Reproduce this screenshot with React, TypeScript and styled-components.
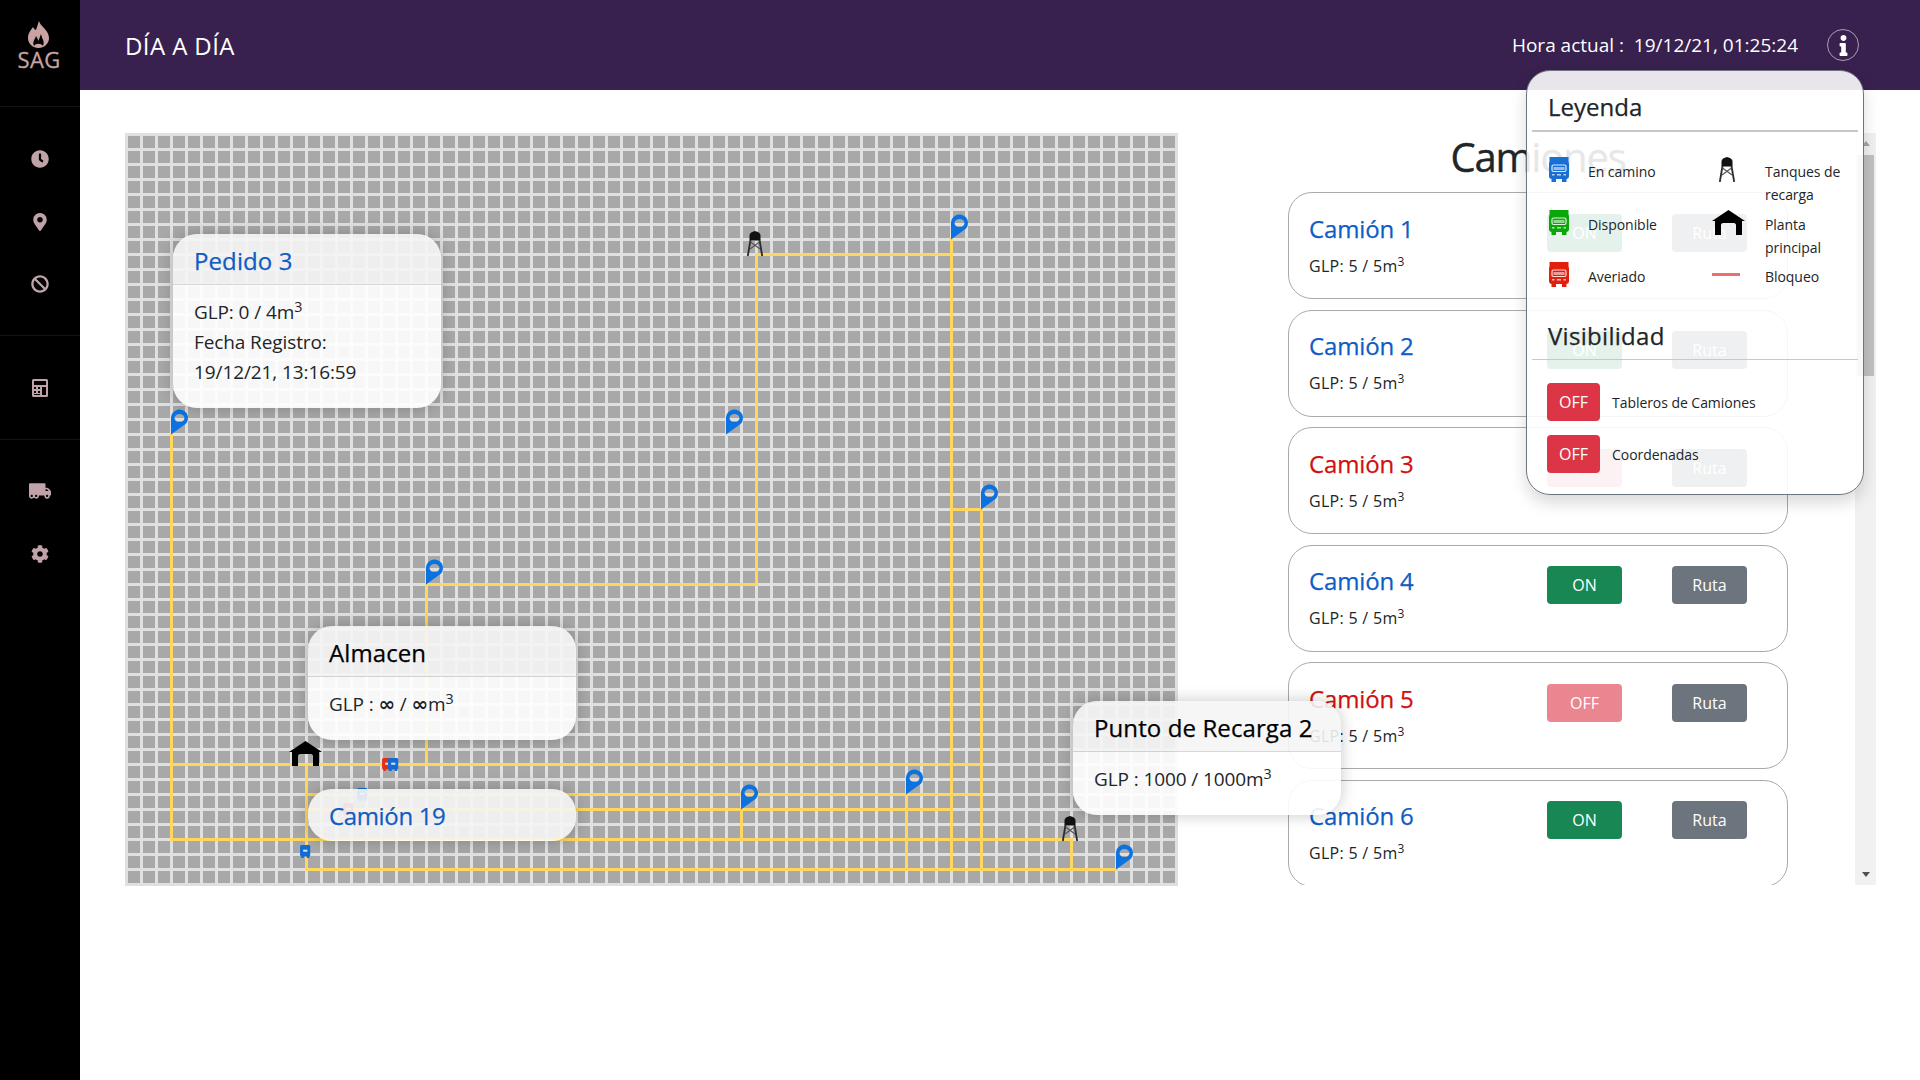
import React from "react";
import styled, { createGlobalStyle } from "styled-components";
import {
  FaBan,
  FaClock,
  FaCog,
  FaInfo,
  FaMapMarkerAlt,
  FaTruckMoving,
} from "react-icons/fa";

const GRID_STEP = 15;
const node = (n: number) => 1.5 + n * GRID_STEP;

type Segment = [number, number, number, number];

// routes in grid coordinates: x1, y1, x2, y2
const ROUTES: Segment[] = [
  [42, 8, 42, 30],
  [42, 8, 55, 8],
  [55, 7, 55, 49],
  [20, 30, 42, 30],
  [20, 30, 20, 42],
  [3, 42, 57, 42],
  [3, 20, 3, 47],
  [3, 47, 63, 47],
  [63, 47, 63, 49],
  [12, 49, 66, 49],
  [12, 42, 12, 49],
  [12, 44, 57, 44],
  [12, 45, 55, 45],
  [41, 45, 41, 47],
  [52, 44, 52, 49],
  [57, 25, 57, 49],
  [55, 25, 57, 25],
];

const PINS = [
  [3, 20],
  [20, 30],
  [40, 20],
  [55, 7],
  [57, 25],
  [41, 45],
  [52, 44],
  [66, 49],
];

const TANKS = [
  [42, 8],
  [63, 47],
];

const MAP_TRUCKS = [
  { x: 257, y: 625, color: "#e0301c" },
  { x: 263, y: 625, color: "#0f6cd6" },
  { x: 175, y: 712, color: "#0f6cd6" },
  { x: 232, y: 655, color: "#0f6cd6" },
  { x: 218, y: 670, color: "#e0301c" },
];

const TRUCKS = [
  { id: 1, active: true },
  { id: 2, active: true },
  { id: 3, active: false },
  { id: 4, active: true },
  { id: 5, active: false },
  { id: 6, active: true },
];

const GlobalStyle = createGlobalStyle`
  html, body {
    margin: 0;
    padding: 0;
    background: #fff;
    font-family: "Open Sans", "Noto Sans", sans-serif;
    color: #212529;
  }
  sup {
    font-size: 0.75em;
    line-height: 0;
    position: relative;
    top: -0.5em;
    vertical-align: baseline;
  }
`;

const Shell = styled.div`
  position: relative;
  display: flex;
  width: 1920px;
  height: 1080px;
  overflow: hidden;
`;

const Sidebar = styled.nav`
  width: 80px;
  flex: none;
  background: #000;
  color: #bfa3a8;
  display: flex;
  flex-direction: column;
`;

const LogoBlock = styled.div`
  height: 106px;
  padding-top: 21px;
  box-sizing: border-box;
  display: flex;
  flex-direction: column;
  align-items: center;
  color: #c9a3a3;

  > svg {
    margin-left: -3px;
  }
`;

const LogoText = styled.span`
  font-size: 22px;
  font-weight: 500;
  line-height: 20px;
  margin-top: 1px;
  margin-left: -2px;
  letter-spacing: 0.3px;
  -webkit-text-stroke: 0.3px currentColor;
`;

const NavGroup = styled.div<{ $height: number; $pad: number; $gap: number }>`
  height: ${(p) => p.$height}px;
  box-sizing: border-box;
  border-top: 1px solid #141414;
  padding-top: ${(p) => p.$pad}px;
  display: flex;
  flex-direction: column;
  align-items: center;
  gap: ${(p) => p.$gap}px;
`;

const NavIcon = styled.span`
  height: 20px;
  display: flex;
  align-items: center;
  justify-content: center;
`;

const Main = styled.div`
  flex: 1;
  display: flex;
  flex-direction: column;
  min-width: 0;
`;

const Header = styled.header`
  height: 90px;
  flex: none;
  box-sizing: border-box;
  padding: 0 61px 0 45px;
  background: #38204f;
  color: #fff;
  display: flex;
  align-items: center;
  justify-content: space-between;
`;

const PageTitle = styled.h1`
  margin: 0;
  font-size: 24px;
  font-weight: 400;
  letter-spacing: 0.4px;
`;

const HeaderRight = styled.div`
  display: flex;
  align-items: center;
  gap: 29px;
`;

const CurrentTime = styled.span`
  font-size: 19px;
  white-space: pre;
`;

const InfoButton = styled.span`
  width: 32px;
  height: 32px;
  box-sizing: border-box;
  border-radius: 50%;
  border: 1.5px solid #a99fb2;
  display: flex;
  align-items: center;
  justify-content: center;
  color: #fff;
  font-size: 21px;
`;

const Content = styled.main`
  flex: 1;
  display: flex;
  padding: 43px 44px 0 45px;
  gap: 43px;
  min-height: 0;
`;

const MapCanvas = styled.div`
  position: relative;
  z-index: 2;
  width: 1053px;
  height: 753px;
  flex: none;
  background-color: #a8a8a8;
  background-image: linear-gradient(to right, #e0e0e0 3px, transparent 3px),
    linear-gradient(to bottom, #e0e0e0 3px, transparent 3px);
  background-size: 15px 15px;

  > svg {
    display: block;
  }
`;

const MapPopover = styled.div<{ $left: number; $top: number; $height: number }>`
  position: absolute;
  left: ${(p) => p.$left}px;
  top: ${(p) => p.$top}px;
  width: 268px;
  height: ${(p) => p.$height}px;
  box-sizing: border-box;
  border-radius: 24px;
  overflow: hidden;
  background: rgba(255, 255, 255, 0.9);
  box-shadow: 0 0 16px rgba(0, 0, 0, 0.22);
`;

const PopoverHeader = styled.div<{ $color: string; $flat?: boolean }>`
  height: 51px;
  box-sizing: border-box;
  padding: 12px 21px 0;
  background: rgba(0, 0, 0, 0.035);
  border-bottom: ${(p) => (p.$flat ? "0" : "1px solid rgba(0, 0, 0, 0.12)")};
  color: ${(p) => p.$color};
  font-size: 24px;
  line-height: 30px;
  letter-spacing: ${(p) => (p.$flat ? "-0.35px" : "0.1px")};
  -webkit-text-stroke: 0.25px currentColor;
  white-space: nowrap;
`;

const PopoverBody = styled.div`
  padding: 13px 21px 0;
  font-size: 19px;
  line-height: 29.8px;
  letter-spacing: -0.1px;
`;

const InfinityMark = styled.span`
  font-family: "DejaVu Sans", sans-serif;
  font-weight: 700;
  font-size: 20px;
  line-height: 0;
`;

const TruckPanel = styled.section`
  flex: 1;
  height: 752px;
  display: flex;
  min-width: 0;
`;

const TruckList = styled.div`
  flex: 1;
  overflow: hidden;
  display: flex;
  flex-direction: column;
  align-items: center;
  min-width: 0;
`;

const PanelTitle = styled.h2`
  margin: 0 0 11.3px;
  font-size: 40px;
  font-weight: 400;
  line-height: 48px;
  letter-spacing: -1.2px;
  -webkit-text-stroke: 0.4px currentColor;
`;

const TruckCard = styled.article`
  width: 500px;
  height: 107px;
  flex: none;
  box-sizing: border-box;
  margin-bottom: 10.5px;
  border: 1px solid #aaa;
  border-radius: 24px;
  display: flex;
  justify-content: space-between;
  padding: 20.7px 40px 0 20px;
`;

const CardTitle = styled.h4<{ $active: boolean }>`
  margin: 0 0 11px;
  font-size: 24px;
  font-weight: 400;
  line-height: 29px;
  letter-spacing: -0.15px;
  -webkit-text-stroke: 0.25px currentColor;
  color: ${(p) => (p.$active ? "#0f5cc4" : "#d10f0f")};
`;

const CardText = styled.div`
  font-size: 16px;
  line-height: 24px;
  letter-spacing: 0.3px;
`;

const CardActions = styled.div`
  display: flex;
  gap: 50px;
  align-items: flex-start;
`;

const ActionButton = styled.button<{ $variant: "on" | "off" | "route" | "danger"; $small?: boolean }>`
  width: ${(p) => (p.$small ? 53 : 75)}px;
  height: 38px;
  flex: none;
  padding: 0;
  border: 0;
  border-radius: 4px;
  color: #fff;
  font-family: inherit;
  font-size: 16px;
  background: ${(p) =>
    p.$variant === "on"
      ? "#198754"
      : p.$variant === "route"
        ? "#6c757d"
        : p.$variant === "danger"
          ? "#dc3545"
          : "#ea868f"};
`;

const ScrollTrack = styled.div`
  position: relative;
  width: 21px;
  flex: none;
  background: #f1f1f1;
`;

const ScrollThumb = styled.div`
  position: absolute;
  left: 2px;
  right: 2px;
  top: 22px;
  height: 221px;
  background: #c1c1c1;
`;

const ScrollArrow = styled.span<{ $down?: boolean }>`
  position: absolute;
  left: 7px;
  ${(p) => (p.$down ? "bottom: 8px;" : "top: 8px;")}
  width: 0;
  height: 0;
  border-left: 4px solid transparent;
  border-right: 4px solid transparent;
  ${(p) => (p.$down ? "border-top: 5px solid #505050;" : "border-bottom: 5px solid #a3a3a3;")}
`;

const LegendPanel = styled.aside`
  position: absolute;
  z-index: 3;
  left: 1526px;
  top: 70px;
  width: 338px;
  height: 425px;
  box-sizing: border-box;
  border: 1px solid #6c757d;
  border-radius: 24px;
  background: rgba(255, 255, 255, 0.89);
  box-shadow: 0 8px 16px rgba(0, 0, 0, 0.15);
`;

const LegendTitle = styled.h3`
  margin: 0 5px;
  height: 61px;
  box-sizing: border-box;
  padding: 21px 0 0 16px;
  border-bottom: 2px solid #c8c8c8;
  font-size: 24px;
  font-weight: 400;
  line-height: 29px;
  -webkit-text-stroke: 0.25px currentColor;
`;

const LegendGrid = styled.div`
  display: grid;
  grid-template-columns: 163px 1fr;
  row-gap: 3.5px;
  margin-top: 25px;
  padding-left: 22px;
`;

const LegendItem = styled.div`
  display: flex;
  align-items: flex-start;
`;

const LegendIcon = styled.div<{ $width: number; $offset?: number }>`
  width: ${(p) => p.$width}px;
  flex: none;
  padding-left: ${(p) => p.$offset || 0}px;
  box-sizing: border-box;

  > svg {
    display: block;
  }
`;

const LegendText = styled.span`
  font-size: 14px;
  line-height: 23px;
  margin-top: 3px;
  letter-spacing: -0.05px;
`;

const BlockLine = styled.div`
  width: 28px;
  height: 3px;
  margin-top: 11px;
  background: #ef6e72;
`;

const VisibilityTitle = styled(LegendTitle)`
  height: 39px;
  padding-top: 0;
  margin-top: 33px;
  border-bottom-width: 1px;
  letter-spacing: 0.3px;
`;

const VisibilityList = styled.div`
  display: flex;
  flex-direction: column;
  gap: 14px;
  margin-top: 23px;
  padding-left: 20px;
`;

const VisibilityRow = styled.div`
  display: flex;
  align-items: center;
  gap: 12px;
  font-size: 14px;
  letter-spacing: -0.05px;
`;

function Flame() {
  return (
    <svg width="21" height="27" viewBox="0 0 21 27">
      <path
        fill="currentColor"
        d="M11 0C12 5 21 9 21 17C21 23 16 27 10.5 27C5 27 0 23 0 17C0 12 3 9 5 6C6 8 7 9 8 9C9 6 10 3 11 0Z"
      />
      <path fill="#000" d="M6 25C4 20 7 19 8 15C9 17 10 18 10.5 20C11 18 12 16 13 13C14 18 17 20 15 25C13 22 8 22 6 25Z" />
    </svg>
  );
}

function CalculatorIcon() {
  return (
    <svg width="16" height="18" viewBox="0 0 16 18" fill="currentColor">
      <path
        fillRule="evenodd"
        d="M1.5 0H14.5A1.5 1.5 0 0 1 16 1.5V16.5A1.5 1.5 0 0 1 14.5 18H1.5A1.5 1.5 0 0 1 0 16.5V1.5A1.5 1.5 0 0 1 1.5 0ZM2 2V6H14V2ZM2 8V10H4V8ZM6 8V10H8V8ZM2 12V14H4V12ZM6 12V14H8V12ZM2 15V16H8V15ZM10 8V16H14V8Z"
      />
    </svg>
  );
}

function Truck({ color }: { color: string }) {
  return (
    <svg width="20" height="25" viewBox="0 0 20 25">
      <rect x="0.5" y="0" width="19" height="9" fill={color} />
      <rect x="0" y="4" width="20" height="18" rx="3" fill={color} />
      <rect x="3" y="8" width="14" height="6.5" rx="1.5" fill="none" stroke="#fff" strokeOpacity="0.85" strokeWidth="1.2" />
      <rect x="4.5" y="10" width="11" height="3" fill="#fff" opacity="0.55" />
      <rect x="3" y="17" width="2.5" height="1.5" fill="#fff" opacity="0.7" />
      <rect x="8" y="17" width="4" height="1.5" fill="#fff" opacity="0.7" />
      <rect x="14.5" y="17" width="2.5" height="1.5" fill="#fff" opacity="0.7" />
      <rect x="2.5" y="21" width="4.5" height="4" fill={color} />
      <rect x="13" y="21" width="4.5" height="4" fill={color} />
    </svg>
  );
}

function TankShape() {
  return (
    <>
      <path fill="#111" d="M2.5 4Q3 1 8 0Q13 1 13.5 4V9.5H2.5Z" />
      <g stroke="#2a2a2a" fill="none">
        <path strokeWidth="1.8" d="M3.5 9L0.8 25M12.5 9L15.2 25" />
        <path strokeWidth="1.2" stroke="#555" d="M3.5 11L13 18M12.5 11L3 18" />
      </g>
    </>
  );
}

function Tank() {
  return (
    <svg width="16" height="25" viewBox="0 0 16 25">
      <TankShape />
    </svg>
  );
}

const HOUSE_PATH = "M16.5 0L33 11H30V25H24V15C24 14 23 13 22 13H11C10 13 9 14 9 15V25H3V11H0Z";

function House() {
  return (
    <svg width="33" height="25" viewBox="0 0 33 25">
      <path fill="#000" fillRule="evenodd" d={HOUSE_PATH} />
    </svg>
  );
}

function PinMark({ k, m }: { k: number; m: number }) {
  return (
    <g transform={`translate(${node(k) - 0.5} ${node(m) - 25})`}>
      <path
        fill="#0b72e0"
        fillRule="evenodd"
        d="M0 25V8.5A8.5 8.5 0 1 1 14.5 14.5ZM8.5 4.6A5 4 0 1 0 8.5 12.6A5 4 0 1 0 8.5 4.6Z"
      />
    </g>
  );
}

function RouteMap() {
  return (
    <svg width="1053" height="753" viewBox="0 0 1053 753">
      <g stroke="#ffd75e" strokeWidth="3" strokeLinecap="square">
        {ROUTES.map(([x1, y1, x2, y2]) => (
          <line key={`${x1}-${y1}-${x2}-${y2}`} x1={node(x1)} y1={node(y1)} x2={node(x2)} y2={node(y2)} />
        ))}
      </g>
      {PINS.map(([k, m]) => (
        <PinMark key={`${k}-${m}`} k={k} m={m} />
      ))}
      {TANKS.map(([k, m]) => (
        <g key={`${k}-${m}`} transform={`translate(${node(k) - 9.5} ${node(m) - 23.5})`}>
          <TankShape />
        </g>
      ))}
      <path transform="translate(164 608)" fill="#000" fillRule="evenodd" d={HOUSE_PATH} />
      {MAP_TRUCKS.map((t) => (
        <svg key={`${t.x}-${t.y}`} x={t.x} y={t.y} width="10.5" height="13" viewBox="0 0 20 25">
          <rect x="0" y="0" width="20" height="22" rx="3" fill={t.color} />
          <rect x="6" y="9" width="8" height="4" fill="#fff" opacity="0.8" />
          <rect x="2.5" y="21" width="4.5" height="4" fill={t.color} />
          <rect x="13" y="21" width="4.5" height="4" fill={t.color} />
        </svg>
      ))}
    </svg>
  );
}

export default function App() {
  return (
    <Shell>
      <GlobalStyle />
      <Sidebar>
        <LogoBlock>
          <Flame />
          <LogoText>SAG</LogoText>
        </LogoBlock>
        <NavGroup $height={229} $pad={42} $gap={42.5}>
          <NavIcon>
            <FaClock size={18} />
          </NavIcon>
          <NavIcon>
            <FaMapMarkerAlt size={18} />
          </NavIcon>
          <NavIcon>
            <FaBan size={18} />
          </NavIcon>
        </NavGroup>
        <NavGroup $height={104} $pad={42} $gap={0}>
          <NavIcon>
            <CalculatorIcon />
          </NavIcon>
        </NavGroup>
        <NavGroup $height={300} $pad={41} $gap={43}>
          <NavIcon>
            <FaTruckMoving size={22} />
          </NavIcon>
          <NavIcon>
            <FaCog size={18} />
          </NavIcon>
        </NavGroup>
      </Sidebar>

      <Main>
        <Header>
          <PageTitle>DÍA A DÍA</PageTitle>
          <HeaderRight>
            <CurrentTime>Hora actual :  19/12/21, 01:25:24</CurrentTime>
            <InfoButton>
              <FaInfo />
            </InfoButton>
          </HeaderRight>
        </Header>

        <Content>
          <MapCanvas>
            <RouteMap />
            <MapPopover $left={48} $top={101} $height={174}>
              <PopoverHeader $color="#0f5cc4">Pedido 3</PopoverHeader>
              <PopoverBody>
                GLP: 0 / 4m<sup>3</sup>
                <br />
                Fecha Registro:
                <br />
                19/12/21, 13:16:59
              </PopoverBody>
            </MapPopover>
            <MapPopover $left={183} $top={493} $height={114}>
              <PopoverHeader $color="#000">Almacen</PopoverHeader>
              <PopoverBody>
                GLP : <InfinityMark>∞</InfinityMark> / <InfinityMark>∞</InfinityMark>m<sup>3</sup>
              </PopoverBody>
            </MapPopover>
            <MapPopover $left={183} $top={656} $height={52}>
              <PopoverHeader $color="#0f5cc4" $flat>
                Camión 19
              </PopoverHeader>
            </MapPopover>
            <MapPopover $left={948} $top={568} $height={114}>
              <PopoverHeader $color="#000">Punto de Recarga 2</PopoverHeader>
              <PopoverBody>
                GLP : 1000 / 1000m<sup>3</sup>
              </PopoverBody>
            </MapPopover>
          </MapCanvas>

          <TruckPanel>
            <TruckList>
              <PanelTitle>Camiones</PanelTitle>
              {TRUCKS.map((truck) => (
                <TruckCard key={truck.id}>
                  <div>
                    <CardTitle $active={truck.active}>Camión {truck.id}</CardTitle>
                    <CardText>
                      GLP: 5 / 5m<sup>3</sup>
                    </CardText>
                  </div>
                  <CardActions>
                    <ActionButton $variant={truck.active ? "on" : "off"}>
                      {truck.active ? "ON" : "OFF"}
                    </ActionButton>
                    <ActionButton $variant="route">Ruta</ActionButton>
                  </CardActions>
                </TruckCard>
              ))}
            </TruckList>
            <ScrollTrack>
              <ScrollArrow />
              <ScrollThumb />
              <ScrollArrow $down />
            </ScrollTrack>
          </TruckPanel>
        </Content>
      </Main>

      <LegendPanel>
        <LegendTitle>Leyenda</LegendTitle>
        <LegendGrid>
          <LegendItem>
            <LegendIcon $width={39}>
              <Truck color="#1a6fd4" />
            </LegendIcon>
            <LegendText>En camino</LegendText>
          </LegendItem>
          <LegendItem>
            <LegendIcon $width={53} $offset={7}>
              <Tank />
            </LegendIcon>
            <LegendText>
              Tanques de
              <br />
              recarga
            </LegendText>
          </LegendItem>
          <LegendItem>
            <LegendIcon $width={39}>
              <Truck color="#0aa60a" />
            </LegendIcon>
            <LegendText>Disponible</LegendText>
          </LegendItem>
          <LegendItem>
            <LegendIcon $width={53}>
              <House />
            </LegendIcon>
            <LegendText>
              Planta
              <br />
              principal
            </LegendText>
          </LegendItem>
          <LegendItem>
            <LegendIcon $width={39}>
              <Truck color="#e0200c" />
            </LegendIcon>
            <LegendText>Averiado</LegendText>
          </LegendItem>
          <LegendItem>
            <LegendIcon $width={53}>
              <BlockLine />
            </LegendIcon>
            <LegendText>Bloqueo</LegendText>
          </LegendItem>
        </LegendGrid>
        <VisibilityTitle>Visibilidad</VisibilityTitle>
        <VisibilityList>
          <VisibilityRow>
            <ActionButton $variant="danger" $small>
              OFF
            </ActionButton>
            Tableros de Camiones
          </VisibilityRow>
          <VisibilityRow>
            <ActionButton $variant="danger" $small>
              OFF
            </ActionButton>
            Coordenadas
          </VisibilityRow>
        </VisibilityList>
      </LegendPanel>
    </Shell>
  );
}
